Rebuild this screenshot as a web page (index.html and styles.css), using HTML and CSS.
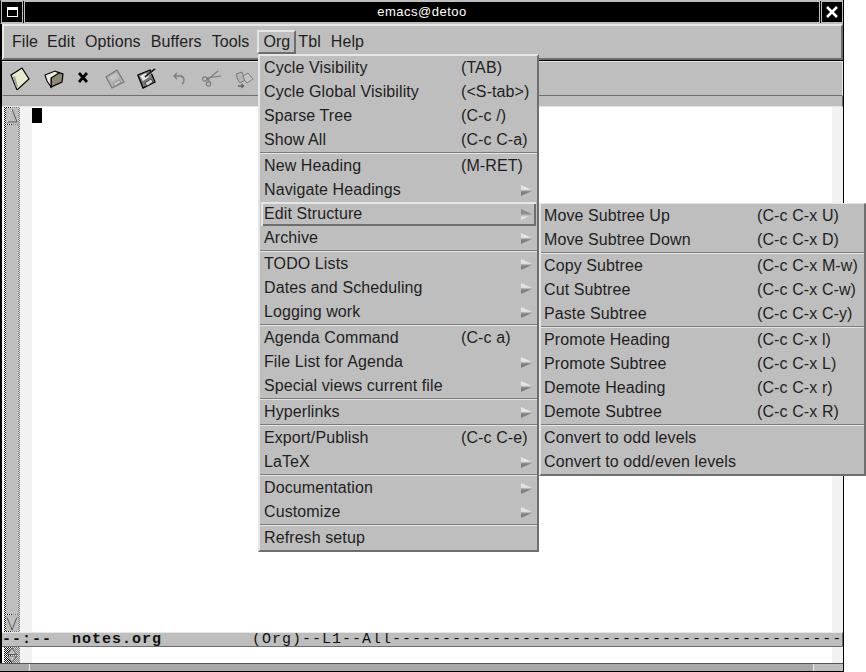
FILE: index.html
```html
<!DOCTYPE html>
<html lang="en">
<head>
<meta charset="utf-8">
<title>emacs@detoo</title>
<link rel="stylesheet" href="styles.css">
</head>
<body>
<div class="window">
  <header class="titlebar">
    <div class="wm-btn"><span class="wm-restore"></span></div>
    <div class="wm-title">emacs@detoo</div>
    <div class="wm-btn"><svg width="12" height="12" viewBox="0 0 12 12"><path d="M1 1L11 11M11 1L1 11" stroke="#fff" stroke-width="2.6"/></svg></div>
  </header>
  <nav class="menubar">
    <span class="mi mi-file">File</span><span class="mi">Edit</span><span class="mi">Options</span><span class="mi">Buffers</span><span class="mi mi-tools">Tools</span><span class="mi mi-active">Org</span><span class="mi mi-tbl">Tbl</span><span class="mi">Help</span>
  </nav>
  <div class="toolbar">
    <svg class="tool t-new" width="20" height="24" viewBox="0 0 20 24"><path d="M1 9L12 2L19 13L7 24Z" fill="#e9e9cd" stroke="#000" stroke-width="1.2"/><path d="M3 11L6 21L8 21L5 10Z" fill="#a9a998"/></svg>
    <svg class="tool t-open" width="20" height="24" viewBox="0 0 20 24"><path d="M7 12L13 6L19 8L18 16L7 21Z" fill="#8f8772" stroke="#000" stroke-width="1.2"/><path d="M1 9L11 5L15 7L7 12L7 21L3 15Z" fill="#ecebd8" stroke="#000" stroke-width="1.1"/></svg>
    <svg class="tool t-close" width="10" height="24" viewBox="0 0 10 24"><path d="M1 7L9 16M9 7L1 16" stroke="#000" stroke-width="2.8"/></svg>
    <svg class="tool t-save" width="20" height="24" viewBox="0 0 20 24"><path d="M1 11L12 4L19 16L7 22Z" fill="#b2b2b2" stroke="#777" stroke-width="1.2"/><path d="M4 11L11 7L14 11L7 15Z" fill="#c4c4c4"/><path d="M8 18L14 14L16 16L10 20Z" fill="#cacaca" stroke="#888" stroke-width=".8"/></svg>
    <svg class="tool t-saveas" width="20" height="24" viewBox="0 0 20 24"><path d="M0.8 9L13 4L18 16L6 22Z" fill="#777" stroke="#000" stroke-width="1.3"/><path d="M3 10L9 7L12 11L6 15Z" fill="#e8e8e8"/><path d="M8 17L14 13L16 16L10 20Z" fill="#d8d8d8" stroke="#222" stroke-width=".7"/><path d="M8 11L18 3" stroke="#222" stroke-width="2"/><path d="M8.5 12L18 4.5" stroke="#ddd" stroke-width=".7"/></svg>
    <svg class="tool t-undo" width="14" height="24" viewBox="0 0 14 24"><path d="M5 7L2 10L5 13M2 10H9Q12 11 12 14T10 18" fill="none" stroke="#7d7d7d" stroke-width="1.4"/></svg>
    <svg class="tool t-cut" width="20" height="24" viewBox="0 0 20 24"><path d="M4 15L16 5M8 16L5 12L19 10" fill="none" stroke="#7d7d7d" stroke-width="1.2"/><circle cx="2.8" cy="13" r="2.2" fill="none" stroke="#7d7d7d" stroke-width="1.2"/><circle cx="6.5" cy="18" r="2.2" fill="none" stroke="#7d7d7d" stroke-width="1.2"/></svg>
    <svg class="tool t-copy" width="20" height="24" viewBox="0 0 20 24"><path d="M1 8L7 6L10 14L5 17L3 14Z" fill="#b4b4b4" stroke="#7d7d7d"/><path d="M8 10L13 7L18 13L12 17L10 15Z" fill="#c4c4c4" stroke="#7d7d7d"/><path d="M3 20H8M6.5 18L8.5 20L6.5 22" fill="none" stroke="#666" stroke-width="1.4"/></svg>
  </div>
  <div class="strip"></div>
  <main class="editor">
    <div class="scrollbar scrollbar-main">
      <div class="sb-arrow"><svg width="12" height="15" viewBox="0 0 12 15"><path d="M6 1L1 14H11Z" fill="#bebebe" stroke="#5a5a5a"/><path d="M6 1L1 14" stroke="#ececec"/></svg></div>
      <div class="sb-thumb"></div>
      <div class="sb-arrow"><svg width="12" height="15" viewBox="0 0 12 15"><path d="M6 14L1 1H11Z" fill="#bebebe" stroke="#5a5a5a"/><path d="M1 1H11" fill="none" stroke="#ececec"/></svg></div>
    </div>
    <div class="fringe"></div>
    <div class="text-area"><span class="cursor"></span></div>
    <div class="fringe fringe-right"></div>
  </main>
  <div class="modeline"><span class="ml-b">--:--  notes.org</span><span class="ml-r">         (Org)--L1--All---------------------------------------------</span></div>
  <div class="minibuffer">
    <div class="scrollbar scrollbar-mini">
      <svg width="12" height="7" viewBox="0 0 12 7"><path d="M6 0L1 7H11Z" fill="#bebebe" stroke="#5a5a5a"/></svg>
      <svg width="12" height="7" viewBox="0 0 12 7"><path d="M6 7L1 0H11Z" fill="#bebebe" stroke="#5a5a5a"/></svg>
    </div>
    <div class="fringe"></div>
    <div class="text-area"></div>
    <div class="fringe fringe-right"></div>
  </div>
  <footer class="statusbar"><div class="st-a"></div><div class="st-b"></div><div class="st-c"></div></footer>
</div>

<div class="menu menu-org">
  <div class="row"><span class="lab">Cycle Visibility</span><span class="key">(TAB)</span></div>
  <div class="row"><span class="lab">Cycle Global Visibility</span><span class="key">(&lt;S-tab&gt;)</span></div>
  <div class="row"><span class="lab">Sparse Tree</span><span class="key">(C-c /)</span></div>
  <div class="row"><span class="lab">Show All</span><span class="key">(C-c C-a)</span></div>
  <div class="sep"></div>
  <div class="row"><span class="lab">New Heading</span><span class="key">(M-RET)</span></div>
  <div class="row"><span class="lab">Navigate Headings</span><span class="arr"></span></div>
  <div class="row row-active"><span class="lab">Edit Structure</span><span class="arr"></span></div>
  <div class="row"><span class="lab">Archive</span><span class="arr"></span></div>
  <div class="sep"></div>
  <div class="row"><span class="lab">TODO Lists</span><span class="arr"></span></div>
  <div class="row"><span class="lab">Dates and Scheduling</span><span class="arr"></span></div>
  <div class="row"><span class="lab">Logging work</span><span class="arr"></span></div>
  <div class="sep"></div>
  <div class="row"><span class="lab">Agenda Command</span><span class="key">(C-c a)</span></div>
  <div class="row"><span class="lab">File List for Agenda</span><span class="arr"></span></div>
  <div class="row"><span class="lab">Special views current file</span><span class="arr"></span></div>
  <div class="sep"></div>
  <div class="row"><span class="lab">Hyperlinks</span><span class="arr"></span></div>
  <div class="sep"></div>
  <div class="row"><span class="lab">Export/Publish</span><span class="key">(C-c C-e)</span></div>
  <div class="row"><span class="lab">LaTeX</span><span class="arr"></span></div>
  <div class="sep"></div>
  <div class="row"><span class="lab">Documentation</span><span class="arr"></span></div>
  <div class="row"><span class="lab">Customize</span><span class="arr"></span></div>
  <div class="sep"></div>
  <div class="row"><span class="lab">Refresh setup</span></div>
</div>

<div class="menu menu-sub">
  <div class="row"><span class="lab">Move Subtree Up</span><span class="key">(C-c C-x U)</span></div>
  <div class="row"><span class="lab">Move Subtree Down</span><span class="key">(C-c C-x D)</span></div>
  <div class="sep"></div>
  <div class="row"><span class="lab">Copy Subtree</span><span class="key">(C-c C-x M-w)</span></div>
  <div class="row"><span class="lab">Cut Subtree</span><span class="key">(C-c C-x C-w)</span></div>
  <div class="row"><span class="lab">Paste Subtree</span><span class="key">(C-c C-x C-y)</span></div>
  <div class="sep"></div>
  <div class="row"><span class="lab">Promote Heading</span><span class="key">(C-c C-x l)</span></div>
  <div class="row"><span class="lab">Promote Subtree</span><span class="key">(C-c C-x L)</span></div>
  <div class="row"><span class="lab">Demote Heading</span><span class="key">(C-c C-x r)</span></div>
  <div class="row"><span class="lab">Demote Subtree</span><span class="key">(C-c C-x R)</span></div>
  <div class="sep"></div>
  <div class="row"><span class="lab">Convert to odd levels</span></div>
  <div class="row"><span class="lab">Convert to odd/even levels</span></div>
</div>
</body>
</html>
```
FILE: styles.css
```css
* { box-sizing: border-box; }
html, body { margin: 0; padding: 0; background: #fff; }
body { width: 866px; height: 672px; overflow: hidden; position: relative; font-family: "Liberation Sans", Arial, sans-serif; font-size: 16px; color: #1e1e1e; }
.window { width: 844px; height: 672px; border-right: 1px solid #000; display: flex; flex-direction: column; background: #000; }
.titlebar { height: 24px; display: flex; gap: 1px; background: #000; border-top: 1px solid #bdbdbd; border-bottom: 1px solid #bdbdbd; border-left: 1px solid #000; }
.wm-btn { width: 22px; border: 1px solid #bdbdbd; display: flex; align-items: center; justify-content: center; background: #000; }
.wm-restore { width: 11px; height: 10px; border: 1px solid #fff; border-top-width: 3px; }
.wm-title { flex: 1; border: 1px solid #bdbdbd; color: #fff; text-align: center; font-size: 13px; line-height: 20px; background: #000; letter-spacing: .5px; }
.menubar { height: 36px; margin: 0 0 1px 2px; background: #bebebe; border: 2px solid; border-color: #e6e6e6 #6e6e6e #6e6e6e #e6e6e6; display: flex; align-items: center; padding-left: 5px; }
.mi { padding: 0 3px; margin-right: 4px; line-height: 23px; letter-spacing: .08px; }
.mi-file { margin-right: 3px; }
.mi-tools { margin-right: 6px; }
.mi-active { border: 2px solid; border-color: #e6e6e6 #6e6e6e #6e6e6e #e6e6e6; padding: 0 4px; margin: 0 -1px 0 -1px; height: 24px; line-height: 20px; }
.mi-tbl { margin-right: 4px; }
.toolbar { height: 35px; margin-left: 2px; background: #bebebe; border: 1px solid; border-color: #e6e6e6 #e6e6e6 #6e6e6e #bebebe; display: flex; align-items: flex-start; padding: 4px 0 0 7px; }
.strip { height: 11px; margin-left: 2px; background: #bebebe; border-right: 1px solid #6e6e6e; border-bottom: 1px solid #e6e6e6; }
.editor { height: 526px; margin-left: 2px; display: flex; background: #fff; }
.scrollbar { width: 16px; margin-left: 2px; background-color: #bebebe; background-image: linear-gradient(90deg, transparent 50%, rgba(190,190,190,.6) 50%), repeating-conic-gradient(#fff 0 25%, #111 0 50%); background-size: 16px 100%, 2px 2px; display: flex; flex-direction: column; justify-content: space-between; align-items: center; padding: 1px 2px; gap: 1px; }
.scrollbar svg { display: block; }
.sb-arrow { width: 12px; height: 16px; flex: none; display: flex; align-items: center; background: #bebebe; }
.sb-thumb { flex: 1; width: 12px; background: #bebebe; }
.fringe { width: 12px; background: #f2f2f2; }
.fringe-right { width: 11px; }
.text-area { flex: 1; background: #fff; }
.cursor { display: block; width: 10px; height: 15px; background: #000; margin-top: 1px; }
.modeline { height: 15px; margin-left: 2px; background: #bebebe; border-top: 1px solid #e6e6e6; border-bottom: 1px solid #6e6e6e; border-right: 1px solid #6e6e6e; font-family: "Liberation Mono", monospace; font-size: 15px; line-height: 14px; letter-spacing: 1px; white-space: pre; overflow: hidden; color: #111; }
.ml-b { font-weight: bold; }
.minibuffer { height: 16px; margin-left: 2px; display: flex; background: #fff; }
.scrollbar-mini { padding: 1px 2px; }
.statusbar { height: 9px; display: flex; background: #a8a8a8; border-top: 1px solid #555; border-bottom: 1px solid #000; }
.st-a { width: 30px; border-right: 1px solid #eee; }
.st-b { flex: 1; border-right: 1px solid #eee; }
.st-c { width: 29px; background: #bebebe; }
.menu { position: absolute; background: #bebebe; border: 2px solid; border-color: #e6e6e6 #6e6e6e #6e6e6e #e6e6e6; display: flex; flex-direction: column; padding: 0; }
.menu-org { left: 258px; top: 54px; width: 281px; height: 498px; }
.menu-sub { left: 539px; top: 203px; width: 327px; height: 273px; border-top-width: 1px; }
.row { height: 24px; flex: none; display: flex; align-items: center; position: relative; line-height: 24px; letter-spacing: .1px; white-space: nowrap; }
.lab { display: block; }
.menu-org .lab { position: absolute; left: 4px; }
.menu-org .key { position: absolute; left: 201px; }
.menu-sub .lab { position: absolute; left: 3px; }
.menu-sub .key { position: absolute; left: 216px; }
.row-active { box-shadow: inset 2px 2px 0 #e6e6e6, inset -2px -2px 0 #6e6e6e; margin: 0 0 0 1px; width: 275px; }
.menu-org .row-active .lab { left: 3px; }
.arr { position: absolute; left: 261px; top: 7px; width: 12px; height: 11px; background: linear-gradient(#e4e4e4 40%, #808080 62%); clip-path: polygon(0 0, 100% 50%, 0 100%); }
.row-active .arr { left: 260px; background: linear-gradient(#8c8c8c 40%, #e6e6e6 75%); }
.sep { height: 2px; flex: none; background: linear-gradient(#7c7c7c 50%, #e6e6e6 50%); }
.tool { display: block; flex: none; }
.t-new { margin-left: 0; }
.t-open { margin-left: 14px; }
.t-close { margin-left: 14px; }
.t-save { margin-left: 17px; }
.t-saveas { margin-left: 12px; }
.t-undo { margin-left: 15px; }
.t-cut { margin-left: 16px; }
.t-copy { margin-left: 13px; }
```
